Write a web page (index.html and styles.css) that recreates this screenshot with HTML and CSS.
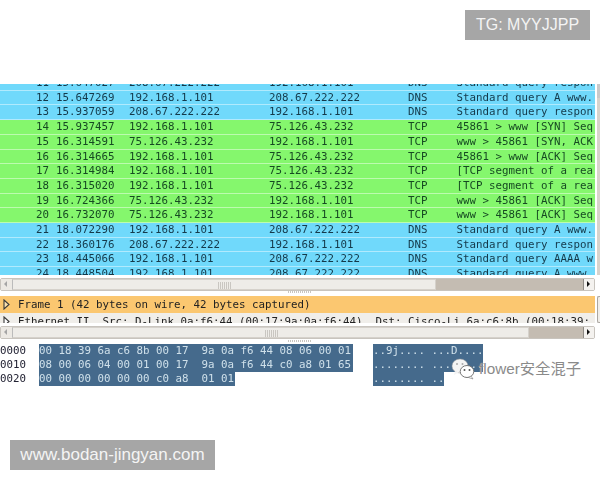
FILE: index.html
```html
<!DOCTYPE html>
<html lang="en">
<head>
<meta charset="utf-8">
<title>Packet capture</title>
<link rel="stylesheet" href="styles.css">
</head>
<body>
<div class="tg">TG: MYYJJPP</div>
<main class="app">
  <section class="packets">
    <div class="list">
      <div class="row dns"><span class="no">11</span><span>15.647027</span><span>208.67.222.222</span><span>192.168.1.101</span><span>DNS</span><span>Standard query respon</span></div>
      <div class="row dns"><span class="no">12</span><span>15.647269</span><span>192.168.1.101</span><span>208.67.222.222</span><span>DNS</span><span>Standard query A www.</span></div>
      <div class="row dns"><span class="no">13</span><span>15.937059</span><span>208.67.222.222</span><span>192.168.1.101</span><span>DNS</span><span>Standard query respon</span></div>
      <div class="row tcp"><span class="no">14</span><span>15.937457</span><span>192.168.1.101</span><span>75.126.43.232</span><span>TCP</span><span>45861 &gt; www [SYN] Seq</span></div>
      <div class="row tcp"><span class="no">15</span><span>16.314591</span><span>75.126.43.232</span><span>192.168.1.101</span><span>TCP</span><span>www &gt; 45861 [SYN, ACK</span></div>
      <div class="row tcp"><span class="no">16</span><span>16.314665</span><span>192.168.1.101</span><span>75.126.43.232</span><span>TCP</span><span>45861 &gt; www [ACK] Seq</span></div>
      <div class="row tcp"><span class="no">17</span><span>16.314984</span><span>192.168.1.101</span><span>75.126.43.232</span><span>TCP</span><span>[TCP segment of a rea</span></div>
      <div class="row tcp"><span class="no">18</span><span>16.315020</span><span>192.168.1.101</span><span>75.126.43.232</span><span>TCP</span><span>[TCP segment of a rea</span></div>
      <div class="row tcp"><span class="no">19</span><span>16.724366</span><span>75.126.43.232</span><span>192.168.1.101</span><span>TCP</span><span>www &gt; 45861 [ACK] Seq</span></div>
      <div class="row tcp"><span class="no">20</span><span>16.732070</span><span>75.126.43.232</span><span>192.168.1.101</span><span>TCP</span><span>www &gt; 45861 [ACK] Seq</span></div>
      <div class="row dns"><span class="no">21</span><span>18.072290</span><span>192.168.1.101</span><span>208.67.222.222</span><span>DNS</span><span>Standard query A www.</span></div>
      <div class="row dns"><span class="no">22</span><span>18.360176</span><span>208.67.222.222</span><span>192.168.1.101</span><span>DNS</span><span>Standard query respon</span></div>
      <div class="row dns"><span class="no">23</span><span>18.445066</span><span>192.168.1.101</span><span>208.67.222.222</span><span>DNS</span><span>Standard query AAAA w</span></div>
      <div class="row dns"><span class="no">24</span><span>18.448504</span><span>192.168.1.101</span><span>208.67.222.222</span><span>DNS</span><span>Standard query A www.</span></div>
    </div>
    <div class="vbar"></div>
  </section>
  <div class="hscroll wide"><span class="arrow left"></span><span class="thumb"><i class="grip"></i></span><span class="rest"></span><span class="arrow right"></span></div>
  <div class="dots"></div>
  <section class="details">
    <div class="tree-list">
      <div class="tree selected"><svg class="tri" width="7" height="11" viewBox="0 0 7 11" aria-hidden="true"><path d="M1 1l5 4.500-5 4.500z" fill="#fde3b0" stroke="#3a3a3a" stroke-width="1.100"/></svg>Frame 1 (42 bytes on wire, 42 bytes captured)</div>
      <div class="tree eth"><svg class="tri" width="7" height="11" viewBox="0 0 7 11" aria-hidden="true"><path d="M1 1l5 4.500-5 4.500z" fill="#fff" stroke="#3a3a3a" stroke-width="1.100"/></svg>Ethernet II, Src: D-Link_0a:f6:44 (00:17:9a:0a:f6:44), Dst: Cisco-Li_6a:c6:8b (00:18:39:</div>
    </div>
    <div class="dbar"></div>
  </section>
  <div class="hscroll narrow"><span class="arrow left"></span><span class="thumb"><i class="grip"></i></span><span class="rest"></span><span class="arrow right"></span></div>
  <div class="dots low"></div>
  <section class="hex">
    <div class="hexrow"><span class="off">0000</span><span class="bytes w1">00 18 39 6a c6 8b 00 17  9a 0a f6 44 08 06 00 01</span><span class="ascii a1">..9j.... ...D....</span></div>
    <div class="hexrow"><span class="off">0010</span><span class="bytes w1">08 00 06 04 00 01 00 17  9a 0a f6 44 c0 a8 01 65</span><span class="ascii a1">........ ........</span></div>
    <div class="hexrow"><span class="off">0020</span><span class="bytes w2">00 00 00 00 00 00 c0 a8  01 01</span><span class="ascii a2">........ ..</span></div>
  </section>
</main>
<div class="mark">
  <svg class="wechat" width="24" height="22" viewBox="0 0 24 22" aria-hidden="true">
    <ellipse cx="9" cy="8" rx="8" ry="7" fill="#f4f4f4" stroke="#9a9a9a" stroke-width=".5"/>
    <path d="M4 13l-1 4 4.500-2.500z" fill="#f4f4f4"/>
    <ellipse cx="16" cy="13.500" rx="6.800" ry="6" fill="#fff" stroke="#777" stroke-width="1"/>
    <path d="M20 18l2 3-4.500-1.500z" fill="#fff" stroke="#777" stroke-width=".6"/>
    <circle cx="13.500" cy="12" r="1" fill="#555"/><circle cx="18.500" cy="12" r="1" fill="#555"/>
    <circle cx="6" cy="6" r="1" fill="#aaa"/><circle cx="11.500" cy="6" r="1" fill="#aaa"/>
  </svg>
  <span class="mark-text">flower安全混子</span>
</div>
<div class="url">www.bodan-jingyan.com</div>
</body>
</html>
```
FILE: styles.css
```css
* { box-sizing: border-box; }
html, body { margin: 0; height: 100%; }
body { width: 600px; height: 480px; background: #fff; overflow: hidden; position: relative; font-family: "DejaVu Sans Mono", monospace; color: #10303a; }
.app { padding-top: 84px; display: flex; flex-direction: column; font-size: 10.8px; }
.packets { display: flex; height: 191px; overflow: hidden; }
.list { width: 595px; margin-top: -7.900px; flex: none; }
.vbar { flex: 1; margin-left: 2px; background: linear-gradient(#c9c9c9 0 14px, #d8d3cc 14px); }
.row { display: grid; grid-template-columns: 56px 73px 140px 139px 48.500px 1fr; height: 14.700px; line-height: 14.700px; white-space: nowrap; overflow: hidden; box-shadow: inset 0 -1px rgba(255,255,255,.45); filter: blur(.3px); }
.no { text-align: right; padding-right: 7px; }
.dns { background: #70d9fb; color: #14394a; }
.tcp { background: #85f76d; color: #164a22; }
.hscroll { display: flex; width: 595px; height: 13px; background: #dcd8d2; border: 1px solid #c8c4be; border-radius: 2px; align-items: stretch; }
.wide { margin-top: 3px; }
.narrow { margin-top: 3px; }
.arrow { width: 11px; flex: none; position: relative; background: #ece9e4; }
.arrow::after { content: ""; position: absolute; top: 2px; border: 3.500px solid transparent; }
.arrow.left::after { left: 3px; border-right-color: #a5a5a5; border-left-width: 0; }
.arrow.right { background: #f4f2ef; width: 11px; border-left: 1px solid #8f8b85; }
.arrow.right::after { left: 3px; border-left-color: #111; border-right-width: 0; }
.thumb { position: relative; display: block; background: #eeece8; border: 1px solid #d5d1cb; border-left-color: #bbb; }
.rest { flex: 1; background: #c4bcb2; }
.wide .thumb { width: 424px; }
.narrow .thumb { width: 517px; }
.grip { position: absolute; top: 2px; left: 50%; margin-left: -6px; width: 13px; height: 7px; background-image: repeating-linear-gradient(90deg, #c9c6c1 0 1px, transparent 1px 2px); }
.dots { height: 2px; margin: 0 0 3px 288px; width: 24px; background-image: repeating-linear-gradient(90deg, #c9c6c1 0 1px, transparent 1px 2px); }
.dots.low { margin: 1px 0 2px 288px; }
.details { display: flex; height: 27px; overflow: hidden; }
.tree-list { width: 595px; flex: none; }
.dbar { flex: 1; margin-left: 2px; background: #f0eeea; border: 1px solid #aaa6a0; border-right: 0; border-radius: 2px 0 0 2px; }
.tree { line-height: 18px; padding-left: 18px; position: relative; white-space: nowrap; overflow: hidden; color: #222; filter: blur(.3px); }
.selected { background: #fbc770; height: 17px; }
.eth { background: #f0eeea; height: 10px; }
.tri { position: absolute; left: 3px; top: 3px; }
.hex { display: flex; flex-direction: column; }
.hexrow { height: 14px; line-height: 14px; white-space: pre; display: flex; color: #223; filter: blur(.3px); }
.off { width: 39px; flex: none; }
.bytes { background: #456a8c; color: #cfe0ea; flex: none; height: 14px; }
.w1 { width: 314px; }
.w2 { width: 196px; }
.ascii { background: #456a8c; color: #cfe0ea; flex: none; }
.a1 { margin-left: 20px; width: 110px; }
.a2 { margin-left: 138px; width: 71px; }
.tg { position: absolute; top: 10px; right: 10px; width: 125px; height: 30px; background: #a6a6a6; color: #f4f4f4; font: 16px/30px "Liberation Sans", sans-serif; text-align: center; }
.url { position: absolute; left: 10px; top: 440px; width: 205px; height: 30px; background: #a6a6a6; color: #f4f4f4; font: 17px/30px "Liberation Sans", sans-serif; text-align: center; }
.mark { position: absolute; left: 451px; top: 358px; display: flex; align-items: center; gap: 4px; color: #8a8a8a; text-shadow: 0 0 1px #fff; }
.wechat { flex: none; }
.mark-text { font: 15.300px/22px "Liberation Sans", "Noto Sans CJK SC", sans-serif; }
```
